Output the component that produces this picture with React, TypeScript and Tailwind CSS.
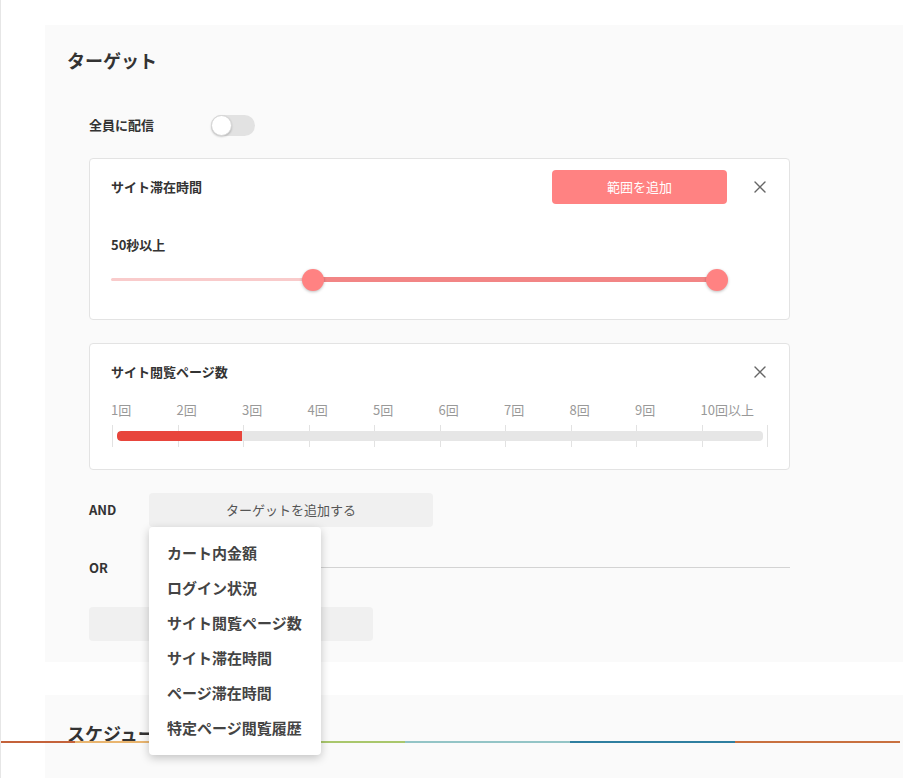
import React from 'react';

const ticks = Array.from({ length: 11 }, (_, i) => i);
const labels = ['1回', '2回', '3回', '4回', '5回', '6回', '7回', '8回', '9回', '10回以上'];
const menuItems = ['カート内金額', 'ログイン状況', 'サイト閲覧ページ数', 'サイト滞在時間', 'ページ滞在時間', '特定ページ閲覧履歴'];
const stripe = ['#c4623a', '#e9b56f', '#a9c76c', '#93c4c6', '#2f7fa0', '#c8703f'];

const CloseIcon: React.FC = () => (
  <svg width="12" height="12" viewBox="0 0 12 12" className="text-[#666]">
    <path d="M1 1L11 11M11 1L1 11" stroke="currentColor" strokeWidth="1.4" strokeLinecap="round" />
  </svg>
);

const StayTimeCard: React.FC = () => (
  <div className="ml-[44px] w-[701px] rounded-[4px] border border-[#e3e3e3] bg-white">
    <div className="flex h-[34px] items-center mt-[11px] pl-[21px] pr-[23px]">
      <span className="flex-1 text-[13px] font-bold text-[#333]">サイト滞在時間</span>
      <button className="h-[34px] w-[175px] rounded-[4px] bg-[#ff8282] text-[13px] text-white">範囲を追加</button>
      <span className="ml-[27px] flex items-center">
        <CloseIcon />
      </span>
    </div>
    <div className="mt-[31px] flex h-[20px] items-center pl-[21px] text-[13px] font-bold text-[#333]">50秒以上</div>
    {/* range slider */}
    <div className="relative ml-[21px] mt-[13px] mb-[27px] h-[24px] w-[617px]">
      <div className="absolute left-0 top-[10px] h-[3px] w-[202px] rounded-full bg-[#f9cbcb]" />
      <div className="absolute left-[202px] top-[9px] h-[5px] w-[404px] bg-[#f28585]" />
      <div className="absolute left-[191px] top-[1px] h-[22px] w-[22px] rounded-full bg-[#ff8282] shadow-[0_1px_3px_rgba(0,0,0,0.25)]" />
      <div className="absolute left-[595px] top-[1px] h-[22px] w-[22px] rounded-full bg-[#ff8282] shadow-[0_1px_3px_rgba(0,0,0,0.25)]" />
    </div>
  </div>
);

const PageCountCard: React.FC = () => (
  <div className="ml-[44px] mt-[23px] w-[701px] rounded-[4px] border border-[#e3e3e3] bg-white">
    <div className="mt-[18px] flex h-[20px] items-center pl-[21px] pr-[23px]">
      <span className="flex-1 text-[13px] font-bold text-[#333]">サイト閲覧ページ数</span>
      <CloseIcon />
    </div>
    <div className="ml-[21px] mt-[18px] grid h-[20px] w-[655px] grid-cols-10 items-center text-[13px] text-[#999]">
      {labels.map((l) => (
        <span key={l} className="whitespace-nowrap">{l}</span>
      ))}
    </div>
    <div className="relative ml-[22px] mt-[5px] mb-[22px] flex h-[22px] w-[656px] justify-between">
      {ticks.map((t) => (
        <div key={t} className="h-full w-px bg-[#e2e2e2]" />
      ))}
      <div className="absolute left-[5px] right-[5px] top-[6px] h-[10px] overflow-hidden rounded-[4px] bg-[#e6e6e6]">
        <div className="h-full w-[125px] rounded-l-[4px] bg-[#e8453c]" />
      </div>
    </div>
  </div>
);

export default function App() {
  return (
    <div className="relative h-[778px] overflow-hidden border-l border-[#e6e6e6] bg-white font-['Noto_Sans_CJK_JP',sans-serif] text-[#333]">
      <div className="pt-[25px]">
        <section className="ml-[44px] mr-[1px] bg-[#fafafa] pb-[21px]">
          <div className="flex h-[70px] items-center pl-[22px] text-[18px] font-bold text-[#333]">ターゲット</div>
          <div className="mt-[10px] flex h-[40px] items-center pl-[44px]">
            <span className="w-[122px] text-[13px] font-bold text-[#333]">全員に配信</span>
            <div className="relative h-[21px] w-[44px] rounded-full bg-[#e2e2e2]">
              <div className="absolute left-0 top-[0px] h-[21px] w-[21px] rounded-full border border-[#d6d6d6] bg-white shadow-[0_1px_2px_rgba(0,0,0,0.2)]" />
            </div>
          </div>
          <div className="mt-[13px]">
            <StayTimeCard />
            <PageCountCard />
          </div>
          <div className="mt-[23px] flex h-[34px] items-center pl-[44px]">
            <span className="w-[60px] text-[13px] font-bold text-[#333]">AND</span>
            <button className="h-[34px] w-[284px] rounded-[4px] bg-[#f0f0f0] text-[13px] text-[#555]">ターゲットを追加する</button>
          </div>
          <div className="mt-[24px] flex h-[34px] w-[745px] items-center pl-[44px]">
            <span className="w-[60px] text-[13px] font-bold text-[#333]">OR</span>
            <div className="mt-[-2px] h-px flex-1 bg-[#d3d3d3]" />
          </div>
          <div className="mt-[22px] flex pl-[44px]">
            <button className="block h-[34px] w-[284px] rounded-[4px] bg-[#f0f0f0]" aria-label="ターゲットを追加する" />
          </div>
        </section>
        <section className="ml-[44px] mr-[1px] mt-[33px] h-[200px] bg-[#fafafa]">
          <div className="flex h-[76px] items-center pl-[22px] text-[18px] font-bold text-[#333]">スケジュール</div>
        </section>
      </div>

      {/* decorative stripe */}
      <div className="absolute left-[-1px] top-[741px] flex h-[2px] w-[901px]">
        <div className="h-full w-[75px]" style={{ background: stripe[0] }} />
        {stripe.slice(1).map((c) => (
          <div key={c} className="h-full w-[165px]" style={{ background: c }} />
        ))}
      </div>

      {/* dropdown menu */}
      <div className="absolute left-[148px] top-[527px] w-[172px] rounded-[4px] bg-white py-[9px] shadow-[0_3px_10px_rgba(0,0,0,0.22)]">
        {menuItems.map((m) => (
          <div key={m} className="flex h-[35px] items-center pl-[18px] text-[15px] font-bold text-[#444]">{m}</div>
        ))}
      </div>
    </div>
  );
}
